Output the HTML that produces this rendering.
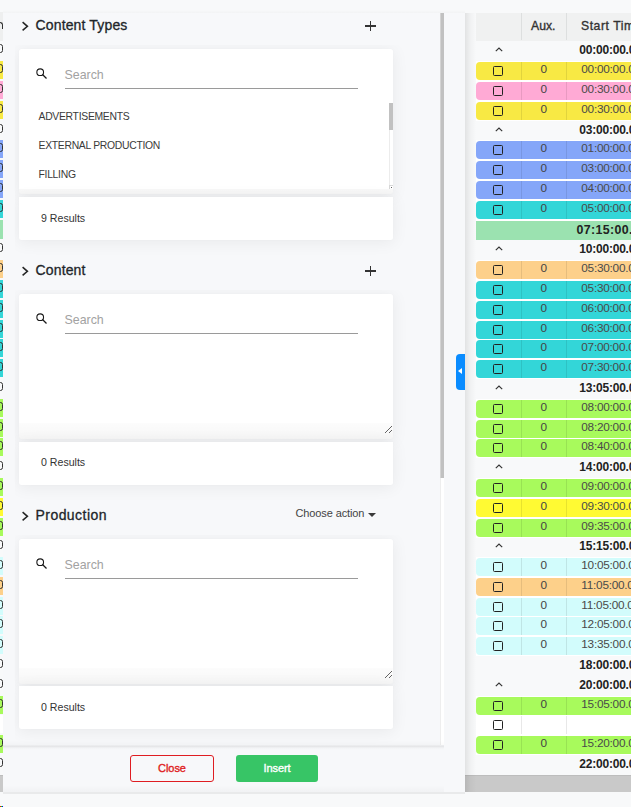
<!DOCTYPE html>
<html><head><meta charset="utf-8"><style>
*{box-sizing:border-box;margin:0;padding:0}
html,body{width:631px;height:807px;overflow:hidden;background:#f8f9fa;font-family:"Liberation Sans",sans-serif;position:relative}
.abs{position:absolute}
#tbl{position:absolute;left:0;top:13px;width:631px;height:779px;background:#f8f9fa;overflow:hidden}
.thead{position:absolute;left:476px;top:13px;width:155px;height:28px;background:#f0f1f1}
.thead .dv{position:absolute;top:0;width:1px;height:27px;background:#dddfdf}
.thead .h{position:absolute;top:5.3px;font-size:12.2px;font-weight:normal;-webkit-text-stroke:0.35px #333;color:#333;line-height:16px;letter-spacing:0;white-space:nowrap}
.tr{position:absolute;left:476px;width:155px;height:20px;background:transparent}
.tr.dat{background:#fff;margin-top:-1px;padding-top:1px}
.tr.grp{background:#f8f9fa}
.caret{position:absolute;left:18.5px;top:4.8px}
.gt{position:absolute;left:103.2px;top:1.3px;font-size:12px;font-weight:bold;color:#222;line-height:14px;white-space:nowrap;letter-spacing:-0.2px}
.sep{background:#fff;margin-top:-1px;height:20px}
.sbg{position:absolute;left:0;right:0;top:1px;height:19px}
.st{left:100.5px;top:3.3px;font-size:12.4px;letter-spacing:0.35px}
.rbg{position:absolute;left:0;right:0;top:1px;height:18px;border-radius:4px 0 0 4px}
.cb{position:absolute;left:17px;top:4px;width:10.2px;height:10px;border:1.6px solid #222;border-radius:1.5px}
.d1,.d2{position:absolute;top:0;bottom:0;width:1px;background:rgba(0,0,0,0.09)}
.d1{left:45px}.d2{left:90px}
.aux{position:absolute;left:64.5px;top:0.5px;font-size:11.8px;color:#444;line-height:13px}
.tm{position:absolute;left:105.3px;top:0.5px;font-size:11.8px;letter-spacing:-0.25px;color:#4a4a4a;line-height:13px;white-space:nowrap}
.hsb{position:absolute;left:0;top:775px;width:631px;height:17px;background:#c9c9c9;border-top:1px solid #bdbdbd}
.lr{position:absolute;left:0;width:3px;height:20px}
.lg{position:absolute;left:-4px;width:6.8px;border:1.5px solid #333;border-radius:2.5px}
#panel{position:absolute;left:3px;top:13px;width:462px;height:779px;background:#f7f8fa;}
#body{position:absolute;left:0;top:0;width:441px;height:732px;overflow:hidden}
.vsb{position:absolute;left:437px;top:0;width:4px;height:732px;background:#fff;border-left:1px solid #eee}
.vth{position:absolute;left:-1px;top:0;width:4px;height:465px;background:#c1c1c1;border-left:1px solid #d4d4d4}
.sec{position:absolute;left:0;width:437px;height:245px}
.chev{position:absolute;left:17px;top:6px;width:12px;height:14px;line-height:0}
.title{position:absolute;left:32.5px;top:3px;font-size:14px;font-weight:normal;-webkit-text-stroke:0.3px #212529;color:#212529;line-height:18px;letter-spacing:0.15px;white-space:nowrap}
.plus{position:absolute;left:362px;top:8px;width:10.5px;height:10.5px}
.plus:before{content:"";position:absolute;left:4.6px;top:0;width:1.3px;height:10px;background:#333}
.plus:after{content:"";position:absolute;left:0;top:4.4px;width:10.8px;height:1.3px;background:#333}
.choose{position:absolute;left:292.5px;top:3px;font-size:11px;color:#444;white-space:nowrap;line-height:14px;letter-spacing:-0.12px}
.tri{display:inline-block;margin-left:3.5px;vertical-align:middle;width:0;height:0;border-left:4.2px solid transparent;border-right:4.2px solid transparent;border-top:4px solid #3a3a3a;position:relative;top:0.7px}
.card{position:absolute;left:16px;width:374px;background:#fff;border-radius:2.5px;box-shadow:0 0 2px rgba(0,0,0,0.025),0 2px 16px 1px rgba(0,0,0,0.06);clip-path:inset(-4.25px -40px -40px -4.25px)}
.card.c2{clip-path:inset(-40px -40px -40px -4.25px)}
.c1:after{content:'';position:absolute;left:0;right:0;bottom:0;height:16px;background:linear-gradient(to bottom,rgba(0,0,0,0.012),rgba(0,0,0,0.035));border-radius:0 0 2.5px 2.5px}
.c1{top:36px;height:145px}
.c2{top:184px;height:43px;border-radius:0 0 2.5px 2.5px}
.sicon{position:absolute;left:15px;top:17px;width:14px;height:14px;line-height:0}
.ph{position:absolute;left:45.5px;top:19px;font-size:12.4px;color:#a2a2a2;line-height:14px}
.ul{position:absolute;left:46px;top:38.5px;width:293px;height:1.2px;background:#9a9a9a}
.list{position:absolute;left:0;top:54px;width:374px;height:86px;overflow:hidden}
.rz{resize:vertical;z-index:2}
.list.sc{background:#fff;z-index:2}
.lcorner{position:absolute;left:370px;top:82px;width:4px;height:4px;background:#fff;border-top:1px solid #d6d6d6;border-left:1px solid #d6d6d6}
.lcorner:after{content:'';position:absolute;left:1px;top:1px;width:1.3px;height:1.3px;border-radius:50%;background:#333}
.li{position:absolute;left:19.5px;font-size:10.4px;color:#3a3a3a;line-height:12px;white-space:nowrap;letter-spacing:-0.3px;margin-top:-1px}
.lsb{position:absolute;left:370px;top:0;width:4px;height:82px;background:#fff;border-left:1px solid #ececec}
.lth{position:absolute;left:-1px;top:0;width:4px;height:27px;background:#c1c1c1}
.grip{position:absolute;left:365px;top:78px;width:9px;height:9px}
.res{position:absolute;left:22px;top:15px;font-size:10.6px;color:#333;line-height:12px;white-space:nowrap}
#footer{position:absolute;left:0;top:732px;width:441px;height:47px;background:linear-gradient(to bottom,rgba(0,0,0,0.035),rgba(0,0,0,0.07) 1.5px,rgba(0,0,0,0.02) 3px,rgba(0,0,0,0) 5px,rgba(0,0,0,0) 40px,rgba(0,0,0,0.025) 47px)}
#footer:before{content:'';position:absolute;left:0;right:0;top:-5px;height:5px;background:linear-gradient(to bottom,rgba(0,0,0,0),rgba(0,0,0,0.02))}
#footer:after{content:'';position:absolute;left:0;width:462px;bottom:-1.5px;height:1.5px;background:rgba(0,0,0,0.06)}
.btn{position:absolute;top:10px;padding-bottom:1.5px;height:27px;border-radius:3px;font-size:11px;font-weight:normal;-webkit-text-stroke:0.35px currentColor;letter-spacing:-0.05px;text-align:center;line-height:25px}
.close{left:127px;width:84px;border:1px solid #df1d22;color:#df1d22;line-height:25px}
.insert{left:233px;width:82px;background:#37c566;color:#fff;line-height:27px}
#panel:before{content:'';position:absolute;left:0;right:0;top:-3px;height:3px;background:linear-gradient(to bottom,rgba(0,0,0,0),rgba(0,0,0,0.022))}
.tab{position:absolute;left:453px;top:341px;width:9px;height:36px;background:#0a8cff;border-radius:4px 0 0 4px}
.tab:after{content:"";position:absolute;left:2px;top:14.3px;width:0;height:0;border-top:3px solid transparent;border-bottom:3px solid transparent;border-right:4px solid #fff}
</style></head><body>
<div id="tbl"></div>
<div class="thead"><div class="dv" style="left:45px"></div><div class="dv" style="left:90px"></div><div class="h" style="left:55px">Aux.</div><div class="h" style="left:105px;letter-spacing:0.55px">Start Time</div></div>
<div class="lr" style="top:12px;height:28.5px;background:#eeefef"><div style="position:absolute;left:-3px;top:10px;width:5.5px;height:7px;border-right:1.5px solid #333;border-top:1.3px solid #333;border-top-right-radius:3px"></div></div>
<div class="lr" style="top:41px"><div class="lg" style="top:3.2px;height:9px"></div></div>
<div class="lr" style="top:61px"><div style="position:absolute;left:0;width:3px;top:0;height:18px;background:#f8e944"></div><div class="lg" style="top:3.2px;height:9px"></div></div>
<div class="lr" style="top:81px"><div style="position:absolute;left:0;width:3px;top:0;height:18px;background:#ffaad5"></div><div class="lg" style="top:3.2px;height:9px"></div></div>
<div class="lr" style="top:101px"><div style="position:absolute;left:0;width:3px;top:0;height:18px;background:#f8e944"></div><div class="lg" style="top:3.2px;height:9px"></div></div>
<div class="lr" style="top:121px"><div class="lg" style="top:3.2px;height:9px"></div></div>
<div class="lr" style="top:140px"><div style="position:absolute;left:0;width:3px;top:0;height:18px;background:#85a6f9"></div><div class="lg" style="top:3.2px;height:9px"></div></div>
<div class="lr" style="top:160px"><div style="position:absolute;left:0;width:3px;top:0;height:18px;background:#85a6f9"></div><div class="lg" style="top:3.2px;height:9px"></div></div>
<div class="lr" style="top:180px"><div style="position:absolute;left:0;width:3px;top:0;height:18px;background:#85a6f9"></div><div class="lg" style="top:3.2px;height:9px"></div></div>
<div class="lr" style="top:200px"><div style="position:absolute;left:0;width:3px;top:0;height:18px;background:#33d6d8"></div><div class="lg" style="top:3.2px;height:9px"></div></div>
<div class="lr" style="top:220px;"><div style="position:absolute;left:0;width:3px;top:0;height:19px;background:#9be2b0"></div></div>
<div class="lr" style="top:240px"><div class="lg" style="top:3.2px;height:9px"></div></div>
<div class="lr" style="top:260px"><div style="position:absolute;left:0;width:3px;top:0;height:18px;background:#fdd08a"></div><div class="lg" style="top:3.2px;height:9px"></div></div>
<div class="lr" style="top:280px"><div style="position:absolute;left:0;width:3px;top:0;height:18px;background:#33d6d8"></div><div class="lg" style="top:3.2px;height:9px"></div></div>
<div class="lr" style="top:300px"><div style="position:absolute;left:0;width:3px;top:0;height:18px;background:#33d6d8"></div><div class="lg" style="top:3.2px;height:9px"></div></div>
<div class="lr" style="top:320px"><div style="position:absolute;left:0;width:3px;top:0;height:18px;background:#33d6d8"></div><div class="lg" style="top:3.2px;height:9px"></div></div>
<div class="lr" style="top:339px"><div style="position:absolute;left:0;width:3px;top:0;height:18px;background:#33d6d8"></div><div class="lg" style="top:3.2px;height:9px"></div></div>
<div class="lr" style="top:359px"><div style="position:absolute;left:0;width:3px;top:0;height:18px;background:#33d6d8"></div><div class="lg" style="top:3.2px;height:9px"></div></div>
<div class="lr" style="top:379px"><div class="lg" style="top:3.2px;height:9px"></div></div>
<div class="lr" style="top:399px"><div style="position:absolute;left:0;width:3px;top:0;height:18px;background:#a8fa5c"></div><div class="lg" style="top:3.2px;height:9px"></div></div>
<div class="lr" style="top:419px"><div style="position:absolute;left:0;width:3px;top:0;height:18px;background:#a8fa5c"></div><div class="lg" style="top:3.2px;height:9px"></div></div>
<div class="lr" style="top:438px"><div style="position:absolute;left:0;width:3px;top:0;height:18px;background:#a8fa5c"></div><div class="lg" style="top:3.2px;height:9px"></div></div>
<div class="lr" style="top:458px"><div class="lg" style="top:3.2px;height:9px"></div></div>
<div class="lr" style="top:478px"><div style="position:absolute;left:0;width:3px;top:0;height:18px;background:#a8fa5c"></div><div class="lg" style="top:3.2px;height:9px"></div></div>
<div class="lr" style="top:498px"><div style="position:absolute;left:0;width:3px;top:0;height:18px;background:#fffa33"></div><div class="lg" style="top:3.2px;height:9px"></div></div>
<div class="lr" style="top:518px"><div style="position:absolute;left:0;width:3px;top:0;height:18px;background:#a8fa5c"></div><div class="lg" style="top:3.2px;height:9px"></div></div>
<div class="lr" style="top:537px"><div class="lg" style="top:3.2px;height:9px"></div></div>
<div class="lr" style="top:557px"><div style="position:absolute;left:0;width:3px;top:0;height:18px;background:#d2fcfc"></div><div class="lg" style="top:3.2px;height:9px"></div></div>
<div class="lr" style="top:577px"><div style="position:absolute;left:0;width:3px;top:0;height:18px;background:#fdd08a"></div><div class="lg" style="top:3.2px;height:9px"></div></div>
<div class="lr" style="top:597px"><div style="position:absolute;left:0;width:3px;top:0;height:18px;background:#d2fcfc"></div><div class="lg" style="top:3.2px;height:9px"></div></div>
<div class="lr" style="top:616px"><div style="position:absolute;left:0;width:3px;top:0;height:18px;background:#d2fcfc"></div><div class="lg" style="top:3.2px;height:9px"></div></div>
<div class="lr" style="top:636px"><div style="position:absolute;left:0;width:3px;top:0;height:18px;background:#d2fcfc"></div><div class="lg" style="top:3.2px;height:9px"></div></div>
<div class="lr" style="top:656px"><div class="lg" style="top:3.2px;height:9px"></div></div>
<div class="lr" style="top:676px"><div class="lg" style="top:3.2px;height:9px"></div></div>
<div class="lr" style="top:696px"><div style="position:absolute;left:0;width:3px;top:0;height:18px;background:#a8fa5c"></div><div class="lg" style="top:3.2px;height:9px"></div></div>
<div class="lr" style="top:715px"><div style="position:absolute;left:0;width:3px;top:0;height:18px;background:#ffffff"></div></div>
<div class="lr" style="top:735px"><div style="position:absolute;left:0;width:3px;top:0;height:18px;background:#a8fa5c"></div><div class="lg" style="top:3.2px;height:9px"></div></div>
<div class="lr" style="top:755px"><div class="lg" style="top:3.2px;height:9px"></div></div>
<div class="tr grp" style="top:42px"><svg class="caret" width="8" height="5" viewBox="0 0 8 5"><polyline points="0.8,4.2 4,1 7.2,4.2" fill="none" stroke="#333" stroke-width="1.15"/></svg><div class="gt">00:00:00.0</div></div>
<div class="tr dat" style="top:62px"><div class="rbg" style="background:#f8e944"><div class="cb"></div><div class="d1"></div><div class="d2"></div><div class="aux">0</div><div class="tm">00:00:00.0</div></div></div>
<div class="tr dat" style="top:82px"><div class="rbg" style="background:#ffaad5"><div class="cb"></div><div class="d1"></div><div class="d2"></div><div class="aux">0</div><div class="tm">00:30:00.0</div></div></div>
<div class="tr dat" style="top:102px"><div class="rbg" style="background:#f8e944"><div class="cb"></div><div class="d1"></div><div class="d2"></div><div class="aux">0</div><div class="tm">00:30:00.0</div></div></div>
<div class="tr grp" style="top:122px"><svg class="caret" width="8" height="5" viewBox="0 0 8 5"><polyline points="0.8,4.2 4,1 7.2,4.2" fill="none" stroke="#333" stroke-width="1.15"/></svg><div class="gt">03:00:00.0</div></div>
<div class="tr dat" style="top:141px"><div class="rbg" style="background:#85a6f9"><div class="cb"></div><div class="d1"></div><div class="d2"></div><div class="aux">0</div><div class="tm">01:00:00.0</div></div></div>
<div class="tr dat" style="top:161px"><div class="rbg" style="background:#85a6f9"><div class="cb"></div><div class="d1"></div><div class="d2"></div><div class="aux">0</div><div class="tm">03:00:00.0</div></div></div>
<div class="tr dat" style="top:181px"><div class="rbg" style="background:#85a6f9"><div class="cb"></div><div class="d1"></div><div class="d2"></div><div class="aux">0</div><div class="tm">04:00:00.0</div></div></div>
<div class="tr dat" style="top:201px"><div class="rbg" style="background:#33d6d8"><div class="cb"></div><div class="d1"></div><div class="d2"></div><div class="aux">0</div><div class="tm">05:00:00.0</div></div></div>
<div class="tr sep" style="top:221px"><div class="sbg" style="background:#9be2b0"></div><div class="gt st">07:15:00.0</div></div>
<div class="tr grp" style="top:241px"><svg class="caret" width="8" height="5" viewBox="0 0 8 5"><polyline points="0.8,4.2 4,1 7.2,4.2" fill="none" stroke="#333" stroke-width="1.15"/></svg><div class="gt">10:00:00.0</div></div>
<div class="tr dat" style="top:261px"><div class="rbg" style="background:#fdd08a"><div class="cb"></div><div class="d1"></div><div class="d2"></div><div class="aux">0</div><div class="tm">05:30:00.0</div></div></div>
<div class="tr dat" style="top:281px"><div class="rbg" style="background:#33d6d8"><div class="cb"></div><div class="d1"></div><div class="d2"></div><div class="aux">0</div><div class="tm">05:30:00.0</div></div></div>
<div class="tr dat" style="top:301px"><div class="rbg" style="background:#33d6d8"><div class="cb"></div><div class="d1"></div><div class="d2"></div><div class="aux">0</div><div class="tm">06:00:00.0</div></div></div>
<div class="tr dat" style="top:321px"><div class="rbg" style="background:#33d6d8"><div class="cb"></div><div class="d1"></div><div class="d2"></div><div class="aux">0</div><div class="tm">06:30:00.0</div></div></div>
<div class="tr dat" style="top:340px"><div class="rbg" style="background:#33d6d8"><div class="cb"></div><div class="d1"></div><div class="d2"></div><div class="aux">0</div><div class="tm">07:00:00.0</div></div></div>
<div class="tr dat" style="top:360px"><div class="rbg" style="background:#33d6d8"><div class="cb"></div><div class="d1"></div><div class="d2"></div><div class="aux">0</div><div class="tm">07:30:00.0</div></div></div>
<div class="tr grp" style="top:380px"><svg class="caret" width="8" height="5" viewBox="0 0 8 5"><polyline points="0.8,4.2 4,1 7.2,4.2" fill="none" stroke="#333" stroke-width="1.15"/></svg><div class="gt">13:05:00.0</div></div>
<div class="tr dat" style="top:400px"><div class="rbg" style="background:#a8fa5c"><div class="cb"></div><div class="d1"></div><div class="d2"></div><div class="aux">0</div><div class="tm">08:00:00.0</div></div></div>
<div class="tr dat" style="top:420px"><div class="rbg" style="background:#a8fa5c"><div class="cb"></div><div class="d1"></div><div class="d2"></div><div class="aux">0</div><div class="tm">08:20:00.0</div></div></div>
<div class="tr dat" style="top:439px"><div class="rbg" style="background:#a8fa5c"><div class="cb"></div><div class="d1"></div><div class="d2"></div><div class="aux">0</div><div class="tm">08:40:00.0</div></div></div>
<div class="tr grp" style="top:459px"><svg class="caret" width="8" height="5" viewBox="0 0 8 5"><polyline points="0.8,4.2 4,1 7.2,4.2" fill="none" stroke="#333" stroke-width="1.15"/></svg><div class="gt">14:00:00.0</div></div>
<div class="tr dat" style="top:479px"><div class="rbg" style="background:#a8fa5c"><div class="cb"></div><div class="d1"></div><div class="d2"></div><div class="aux">0</div><div class="tm">09:00:00.0</div></div></div>
<div class="tr dat" style="top:499px"><div class="rbg" style="background:#fffa33"><div class="cb"></div><div class="d1"></div><div class="d2"></div><div class="aux">0</div><div class="tm">09:30:00.0</div></div></div>
<div class="tr dat" style="top:519px"><div class="rbg" style="background:#a8fa5c"><div class="cb"></div><div class="d1"></div><div class="d2"></div><div class="aux">0</div><div class="tm">09:35:00.0</div></div></div>
<div class="tr grp" style="top:538px"><svg class="caret" width="8" height="5" viewBox="0 0 8 5"><polyline points="0.8,4.2 4,1 7.2,4.2" fill="none" stroke="#333" stroke-width="1.15"/></svg><div class="gt">15:15:00.0</div></div>
<div class="tr dat" style="top:558px"><div class="rbg" style="background:#d2fcfc"><div class="cb"></div><div class="d1"></div><div class="d2"></div><div class="aux">0</div><div class="tm">10:05:00.0</div></div></div>
<div class="tr dat" style="top:578px"><div class="rbg" style="background:#fdd08a"><div class="cb"></div><div class="d1"></div><div class="d2"></div><div class="aux">0</div><div class="tm">11:05:00.0</div></div></div>
<div class="tr dat" style="top:598px"><div class="rbg" style="background:#d2fcfc"><div class="cb"></div><div class="d1"></div><div class="d2"></div><div class="aux">0</div><div class="tm">11:05:00.0</div></div></div>
<div class="tr dat" style="top:617px"><div class="rbg" style="background:#d2fcfc"><div class="cb"></div><div class="d1"></div><div class="d2"></div><div class="aux">0</div><div class="tm">12:05:00.0</div></div></div>
<div class="tr dat" style="top:637px"><div class="rbg" style="background:#d2fcfc"><div class="cb"></div><div class="d1"></div><div class="d2"></div><div class="aux">0</div><div class="tm">13:35:00.0</div></div></div>
<div class="tr grp" style="top:657px"><div class="gt">18:00:00.0</div></div>
<div class="tr grp" style="top:677px"><svg class="caret" width="8" height="5" viewBox="0 0 8 5"><polyline points="0.8,4.2 4,1 7.2,4.2" fill="none" stroke="#333" stroke-width="1.15"/></svg><div class="gt">20:00:00.0</div></div>
<div class="tr dat" style="top:697px"><div class="rbg" style="background:#a8fa5c"><div class="cb"></div><div class="d1"></div><div class="d2"></div><div class="aux">0</div><div class="tm">15:05:00.0</div></div></div>
<div class="tr dat" style="top:716px"><div class="rbg" style="background:#ffffff"><div class="cb"></div><div class="d1"></div><div class="d2"></div><div class="aux"></div><div class="tm"></div></div></div>
<div class="tr dat" style="top:736px"><div class="rbg" style="background:#a8fa5c"><div class="cb"></div><div class="d1"></div><div class="d2"></div><div class="aux">0</div><div class="tm">15:20:00.0</div></div></div>
<div class="tr grp" style="top:756px"><div class="gt">22:00:00.0</div></div>
<div class="hsb"></div>
<div style="position:absolute;left:465px;top:13px;width:11px;height:779px;background:linear-gradient(to right,rgba(0,0,0,0.09),rgba(0,0,0,0.03) 50%,rgba(0,0,0,0))"></div>
<div style="position:absolute;left:3px;top:13px;width:1px;height:779px;background:rgba(255,255,255,0.6)"></div>
<div id="panel">
 <div id="body">
  
<div class="sec" style="top:0px">
  <div class="chev"><svg width="12" height="14" viewBox="0 0 12 14"><polyline points="2.6,3.2 7.4,7.3 2.6,11.4" fill="none" stroke="#252525" stroke-width="1.55" stroke-linecap="butt" stroke-linejoin="miter"/></svg></div>
  <div class="title">Content Types</div>
  <div class="plus"></div>
  <div class="card c1">
    <div class="sicon"><svg width="14" height="14" viewBox="0 0 14 14"><circle cx="6.2" cy="6.2" r="3.35" fill="none" stroke="#1a1a1a" stroke-width="1.1"/><line x1="8.5" y1="8.5" x2="12.5" y2="12.5" stroke="#1a1a1a" stroke-width="1.3"/></svg></div>
    <div class="ph">Search</div>
    <div class="ul"></div>
    <div class="list sc"><div class="li" style="top:9px">ADVERTISEMENTS</div><div class="li" style="top:38px">EXTERNAL PRODUCTION</div><div class="li" style="top:67px">FILLING</div><div class="lsb"><div class="lth"></div></div><div class="lcorner"></div></div>
  </div>
  <div class="card c2" style="margin-top:0px"><div class="res" style="margin-top:0px">9 Results</div></div>
</div>
  
<div class="sec" style="top:245px">
  <div class="chev"><svg width="12" height="14" viewBox="0 0 12 14"><polyline points="2.6,3.2 7.4,7.3 2.6,11.4" fill="none" stroke="#252525" stroke-width="1.55" stroke-linecap="butt" stroke-linejoin="miter"/></svg></div>
  <div class="title">Content</div>
  <div class="plus"></div>
  <div class="card c1">
    <div class="sicon"><svg width="14" height="14" viewBox="0 0 14 14"><circle cx="6.2" cy="6.2" r="3.35" fill="none" stroke="#1a1a1a" stroke-width="1.1"/><line x1="8.5" y1="8.5" x2="12.5" y2="12.5" stroke="#1a1a1a" stroke-width="1.3"/></svg></div>
    <div class="ph">Search</div>
    <div class="ul"></div>
    <div class="list rz"></div>
  </div>
  <div class="card c2" style="margin-top:0px"><div class="res" style="margin-top:-1px">0 Results</div></div>
</div>
  
<div class="sec" style="top:490px">
  <div class="chev"><svg width="12" height="14" viewBox="0 0 12 14"><polyline points="2.6,3.2 7.4,7.3 2.6,11.4" fill="none" stroke="#252525" stroke-width="1.55" stroke-linecap="butt" stroke-linejoin="miter"/></svg></div>
  <div class="title" style='letter-spacing:0.45px'>Production</div>
  <div class="choose">Choose action<span class="tri"></span></div>
  <div class="card c1">
    <div class="sicon"><svg width="14" height="14" viewBox="0 0 14 14"><circle cx="6.2" cy="6.2" r="3.35" fill="none" stroke="#1a1a1a" stroke-width="1.1"/><line x1="8.5" y1="8.5" x2="12.5" y2="12.5" stroke="#1a1a1a" stroke-width="1.3"/></svg></div>
    <div class="ph">Search</div>
    <div class="ul"></div>
    <div class="list rz"></div>
  </div>
  <div class="card c2" style="margin-top:-1px"><div class="res" style="margin-top:0px">0 Results</div></div>
</div>
  <div class="vsb"><div class="vth"></div></div>
 </div>
 <div class="tab"></div>
 <div id="footer"><div class="btn close">Close</div><div class="btn insert">Insert</div></div>
</div>
<div style="position:absolute;left:0;top:806px;width:1px;height:1px;background:#f00"></div>
<div style="position:absolute;left:1px;top:806px;width:1px;height:1px;background:#0f0"></div>
<div style="position:absolute;left:2px;top:806px;width:1px;height:1px;background:#00f"></div>
</body></html>
